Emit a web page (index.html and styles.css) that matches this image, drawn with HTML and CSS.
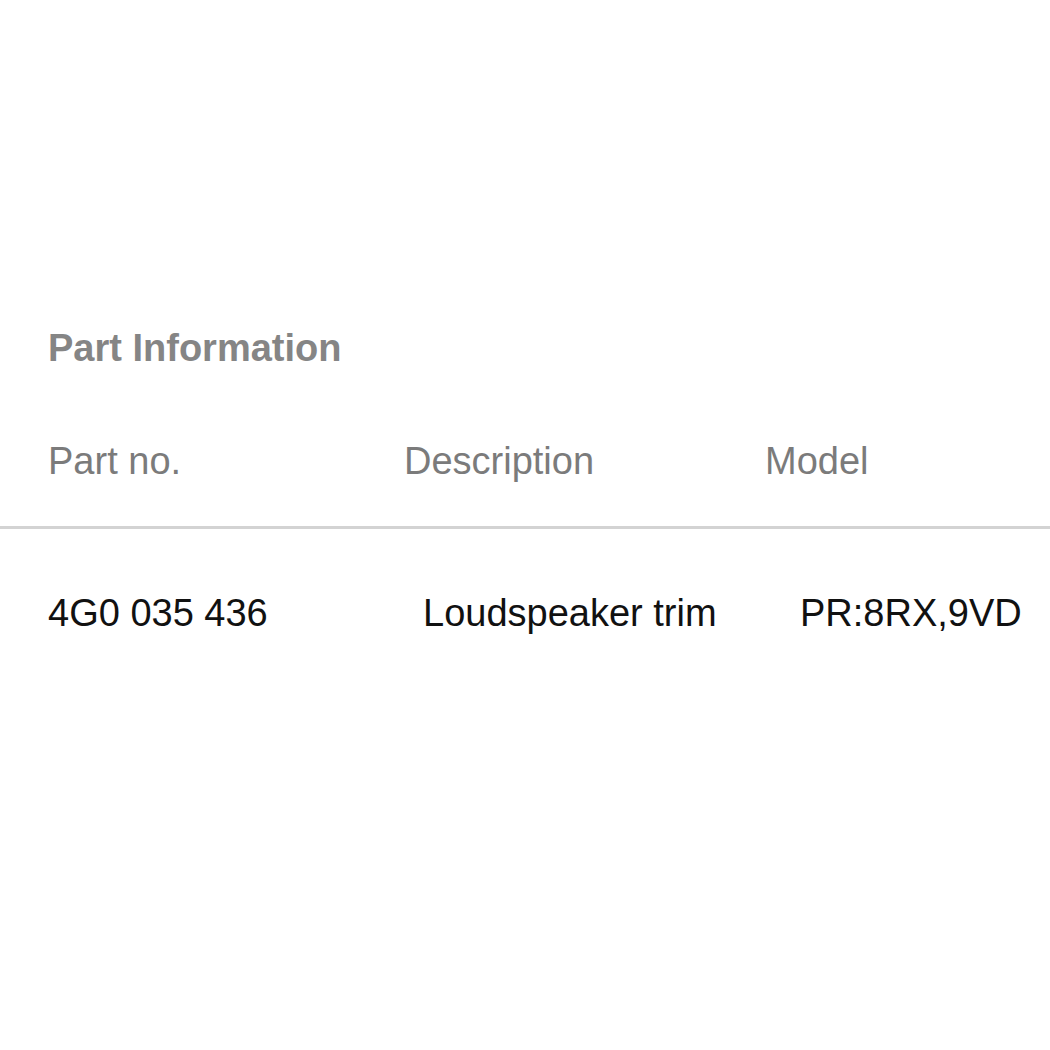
FILE: index.html
```html
<!DOCTYPE html>
<html>
<head>
	<title>Part Information</title>
	<link rel="stylesheet" href="styles.css">
</head>
<body>
	<div class="_panel">
		<p class="_title">Part Information</p>
		<div class="_head">
			<p>Part no.</p>
			<p>Description</p>
			<p>Model</p>
		</div>
		<div class="_row">
			<p>4G0 035 436</p>
			<p>Loudspeaker trim</p>
			<p>PR:8RX,9VD</p>
		</div>
	</div>
</body>
</html>
```

FILE: styles.css
```css
html, body {
	margin: 0;
	background: #fff;
	font-family: "Liberation Sans", Arial, sans-serif;
	font-size: 38px;
	line-height: 44px;
}

p {
	margin: 0;
	white-space: nowrap;
}

._panel {
	display: flex;
	flex-direction: column;
	padding-top: 326px;
}

._title {
	padding-left: 48px;
	color: #858585;
	font-weight: bold;
}

._head {
	display: grid;
	grid-template-columns: 356px 361px 1fr;
	margin-top: 69px;
	padding-left: 48px;
	padding-bottom: 43px;
	border-bottom: 3px solid #d3d3d3;
	color: #7b7b7b;
}

._row {
	display: grid;
	grid-template-columns: 375px 377px 1fr;
	margin-top: 62px;
	padding-left: 48px;
	color: #111;
}
```
